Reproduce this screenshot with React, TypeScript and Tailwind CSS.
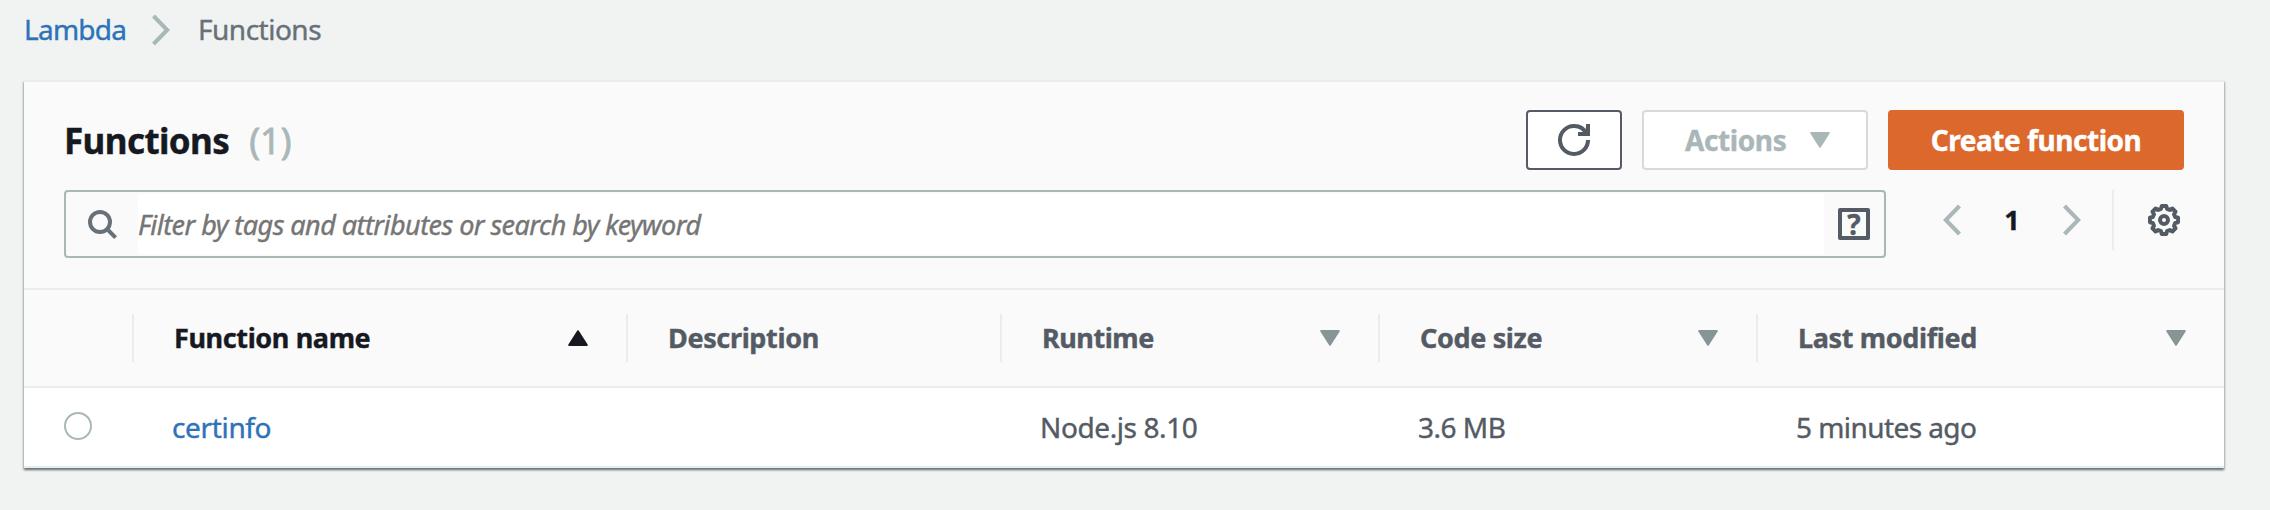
import type { ReactNode } from 'react';

type IconProps = { className?: string };

function Chevron({ className = '', left = false }: IconProps & { left?: boolean }) {
  return (
    <svg viewBox="0 0 18 32" className={`h-8 w-[18px] shrink-0 fill-none stroke-[#aab7b8] stroke-4 ${className}`}>
      <path d={left ? 'M16.5 2 2.8 16l13.7 14' : 'M1.5 2l13.7 14L1.5 30'} />
    </svg>
  );
}

function Caret({ className = '', up = false }: IconProps & { up?: boolean }) {
  return (
    <svg viewBox="0 0 20 16" className={`h-4 w-5 shrink-0 stroke-2 ${className}`} strokeLinejoin="round">
      <path d={up ? 'M1.2 15h17.6L10 1.2z' : 'M1.2 1h17.6L10 14.8z'} />
    </svg>
  );
}

function RefreshIcon() {
  return (
    <svg viewBox="0 0 16 16" className="size-8 fill-none stroke-[#545b64] stroke-2">
      <path d="M10 5h5V0" />
      <path d="M11 4.7 14.4 4.7 14.4 1.5" className="stroke-1" />
      <path d="M15 8a6.957 6.957 0 0 1-7 7 6.957 6.957 0 0 1-7-7 6.957 6.957 0 0 1 7-7 6.87 6.87 0 0 1 6.3 4" />
    </svg>
  );
}

function SearchIcon() {
  return (
    <svg viewBox="0 0 32 32" className="size-8 shrink-0 fill-none stroke-[#687078] stroke-4">
      <circle cx="14" cy="14" r="10" />
      <path d="M21 21l8.6 8.6" />
    </svg>
  );
}

const gearPoints = Array.from({ length: 8 }, (_, k) =>
  [
    [-9, 7.1],
    [9, 7.1],
    [15, 5.8],
    [30, 5.8],
  ].map(([offset, radius]) => {
    const a = ((k * 45 + offset) * Math.PI) / 180;
    return `${(8 + radius * Math.sin(a)).toFixed(2)},${(8 - radius * Math.cos(a)).toFixed(2)}`;
  }),
)
  .flat()
  .join(' ');

function GearIcon() {
  return (
    <svg viewBox="0 0 16 16" className="size-8 fill-none stroke-[#545b64] stroke-2" strokeLinejoin="round">
      <polygon points={gearPoints} />
      <circle cx="8" cy="8" r="2" />
    </svg>
  );
}

type HeaderProps = { children?: ReactNode; sort?: 'up' | 'down'; last?: boolean; tracking?: string };

function HeaderCell({ children, sort, last, tracking = '' }: HeaderProps) {
  return (
    <div
      className={`flex h-12 items-center justify-between pr-[38px] pl-10 text-[27px] font-bold ${
        last ? '' : 'border-r-2 border-[#eaeded]'
      } ${sort === 'up' ? 'text-[#16191f]' : 'text-[#545b64]'} ${tracking}`}
    >
      <span>{children}</span>
      {sort === 'up' && <Caret up className="fill-[#16191f] stroke-[#16191f]" />}
      {sort === 'down' && <Caret className="fill-[#879596] stroke-[#879596]" />}
    </div>
  );
}

const columns = 'grid grid-cols-[110px_494px_374px_378px_378px_466px] items-center';

export default function App() {
  return (
    <div className="h-[510px] w-[2270px] overflow-hidden bg-[#f1f3f3] font-['Noto_Sans',sans-serif] text-[28px] leading-10 whitespace-nowrap text-[#545b64] [-webkit-text-stroke:0.4px]">
      <nav className="flex h-20 items-start pt-[9px] pl-6">
        <a className="w-32 tracking-[-0.75px] text-[#2e73b8]">Lambda</a>
        <Chevron className="mt-[5px]" />
        <span className="ml-7 tracking-[-0.5px] text-[#687078]">Functions</span>
      </nav>

      <main className="ml-6 w-[2200px] border-y-2 border-[#eaeded] bg-white shadow-[0_2px_2px_0_rgba(0,28,36,0.35),1px_2px_2px_0_rgba(0,28,36,0.2),-1px_2px_2px_0_rgba(0,28,36,0.2)]">
        <header className="border-b-2 border-[#eaeded] bg-[#fafafa] px-10 pt-7 pb-[30px]">
          <div className="flex h-[60px] items-center">
            <h1 className="pt-0.5 text-[35px] font-bold tracking-[-0.6px] text-[#16191f]">Functions</h1>
            <span className="ml-5 pt-0.5 text-[36px] text-[#aab7b8] [-webkit-text-stroke:0.8px]">(1)</span>
            <div className="ml-auto flex h-[60px] gap-5 font-bold">
              <button className="flex w-24 items-center justify-center rounded-[4px] border-2 border-[#545b64] bg-white">
                <RefreshIcon />
              </button>
              <button className="flex w-[226px] items-center justify-between rounded-[4px] border-2 border-[#d5dbdb] bg-white pr-9 pl-[41px] tracking-[-0.4px] text-[#aab7b8]">
                Actions
                <Caret className="fill-[#aab7b8] stroke-[#aab7b8]" />
              </button>
              <button className="w-[296px] rounded-[4px] bg-[#dc682c] tracking-[-0.45px] text-white">
                Create function
              </button>
            </div>
          </div>

          <div className="mt-5 flex items-start">
            <div className="flex h-[68px] w-[1822px] items-center rounded-[4px] border-2 border-[#aab7b8] py-0.5">
              <div className="flex w-[72px] pl-5">
                <SearchIcon />
              </div>
              <div className="flex h-[60px] w-[1686px] items-center bg-white pt-px text-[27px] tracking-[-0.54px] text-[#757575] italic">
                Filter by tags and attributes or search by keyword
              </div>
              <div className="ml-3.5 flex size-8 items-center justify-center rounded-[2px] border-4 border-[#545b64] text-[28px] font-bold">
                ?
              </div>
            </div>
            <div className="flex h-[60px] items-center">
              <Chevron left className="ml-[57px]" />
              <span className="w-[102px] text-center text-[27px] font-bold text-[#16191f]">1</span>
              <Chevron />
              <div className="ml-[31px] h-[60px] w-0.5 bg-[#eaeded]" />
              <div className="ml-[34px]">
                <GearIcon />
              </div>
            </div>
          </div>
        </header>

        <div className={`${columns} h-[98px] border-b-2 border-[#eaeded] bg-[#fafafa]`}>
          <HeaderCell />
          <HeaderCell sort="up" tracking="tracking-[-0.38px]">Function name</HeaderCell>
          <HeaderCell tracking="tracking-[-0.36px]">Description</HeaderCell>
          <HeaderCell sort="down" tracking="tracking-[-0.45px]">Runtime</HeaderCell>
          <HeaderCell sort="down" tracking="tracking-[-0.35px]">Code size</HeaderCell>
          <HeaderCell sort="down" tracking="tracking-[-0.35px]" last>Last modified</HeaderCell>
        </div>

        <div className={`${columns} h-[78px]`}>
          <div className="mb-0.5 ml-10 size-7 rounded-full border-2 border-[#aab7b8]" />
          <a className="pl-[38px] tracking-[-0.35px] text-[#2e73b8]">certinfo</a>
          <span />
          <span className="pl-[38px] tracking-[-0.4px]">Node.js 8.10</span>
          <span className="pl-[38px] tracking-[-0.5px]">3.6 MB</span>
          <span className="pl-[38px] tracking-[-0.57px]">5 minutes ago</span>
        </div>
      </main>
    </div>
  );
}
